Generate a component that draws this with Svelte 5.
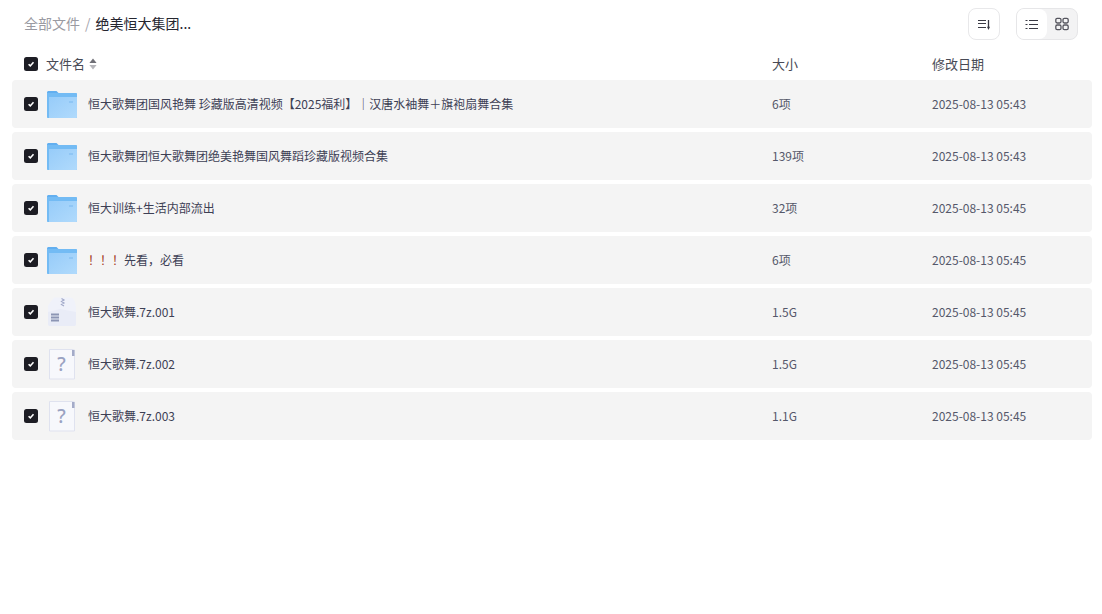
<script>
  const rows = [
    { kind: "folder", name: "恒大歌舞团国风艳舞 珍藏版高清视频【2025福利】｜汉唐水袖舞＋旗袍扇舞合集", size: "6项", date: "2025-08-13 05:43" },
    { kind: "folder", name: "恒大歌舞团恒大歌舞团绝美艳舞国风舞蹈珍藏版视频合集", size: "139项", date: "2025-08-13 05:43" },
    { kind: "folder", name: "恒大训练+生活内部流出", size: "32项", date: "2025-08-13 05:45" },
    { kind: "folder", mark: "！！！", name: "先看，必看", size: "6项", date: "2025-08-13 05:45" },
    { kind: "zip", name: "恒大歌舞.7z.001", size: "1.5G", date: "2025-08-13 05:45" },
    { kind: "unknown", name: "恒大歌舞.7z.002", size: "1.5G", date: "2025-08-13 05:45" },
    { kind: "unknown", name: "恒大歌舞.7z.003", size: "1.1G", date: "2025-08-13 05:45" }
  ];
</script>

{#snippet check()}
  <span class="check">
    <svg width="10" height="10" viewBox="0 0 10 10"><path d="M2.6 5.2 4.300 6.900 7.500 3.200" fill="none" stroke="#fff" stroke-width="1.600" /></svg>
  </span>
{/snippet}

<div class="page">
  <header class="top">
    <nav class="crumbs">
      <span class="root">全部文件</span>
      <span class="sep">/</span>
      <span class="current">绝美恒大集团...</span>
    </nav>
    <div class="tools">
      <button class="tool" aria-label="排序">
        <svg width="16" height="16" viewBox="0 0 16 16" fill="none" stroke="#3a3a44">
          <path d="M2 4.500H10M2 7.500H10M2 11.500H10" />
          <path d="M12.500 4V12" stroke-width="1.300" />
          <path d="M11 10.800 12.500 14 14 10.800Z" fill="#3a3a44" stroke="none" />
        </svg>
      </button>
      <div class="switch">
        <button class="mode on" aria-label="列表">
          <svg width="14" height="14" viewBox="0 0 14 14" fill="none" stroke="#3a3a44">
            <path d="M0.500 3.500H2.500M0.500 7.500H2.500M0.500 11.500H2.500M4 3.500H13M4 7.500H13M4 11.500H13" />
          </svg>
        </button>
        <button class="mode" aria-label="网格">
          <svg width="14" height="14" viewBox="0 0 14 14" fill="none" stroke="#55555e" stroke-width="1.300">
            <rect x="0.800" y="1.400" width="5.200" height="4.600" rx="1.400" />
            <rect x="8" y="1.400" width="5.200" height="4.600" rx="1.400" />
            <rect x="0.800" y="8" width="5.200" height="4.600" rx="1.400" />
            <rect x="8" y="8" width="5.200" height="4.600" rx="1.400" />
          </svg>
        </button>
      </div>
    </div>
  </header>

  <div class="head">
    {@render check()}
    <div class="col-name head-name">
      <span class="label">文件名</span>
      <svg width="8" height="12" viewBox="0 0 8 12"><path d="M4 0.500 7.600 5H0.400Z" fill="#6f6f76" /><path d="M4 11.500 0.400 7H7.600Z" fill="#b5b5ba" /></svg>
    </div>
    <div class="col-size label">大小</div>
    <div class="col-date label">修改日期</div>
  </div>

  <div class="list">
    {#each rows as row}
      <div class="row">
        {@render check()}
        <div class="icon">
          {#if row.kind === "folder"}
            <svg width="32" height="30" viewBox="0 0 32 30">
              <defs>
                <linearGradient id="front" x1="0" y1="0" x2="1" y2="1">
                  <stop offset="0" stop-color="#97ccf9" />
                  <stop offset="1" stop-color="#b0dafc" />
                </linearGradient>
              </defs>
              <path d="M1 3.500C1 2.600 1.700 2 2.500 2H10.500L13 4.500H1Z" fill="#62aff0" />
              <path d="M1 4H30C30.600 4 31 4.400 31 5V28C31 28.600 30.600 29 30 29H2C1.400 29 1 28.600 1 28Z" fill="#73bbf4" />
              <path d="M3 8H31V28C31 28.600 30.600 29 30 29H3Z" fill="url(#front)" />
              <rect x="23" y="12" width="4" height="2" fill="#8fc6f5" />
            </svg>
          {:else if row.kind === "zip"}
            <svg width="32" height="32" viewBox="0 0 32 32">
              <path d="M3 8 8 1.500H24C26 1.500 28 3 28.500 5L30 10V28C30 29.400 29 30 28 30H4C3 30 2 29.400 2 28V10Z" fill="#f0f2fa" />
              <path d="M2 16 14 13 30 16V28C30 29.400 29 30 28 30H4C3 30 2 29.400 2 28Z" fill="#e9ecf7" />
              <path d="M15.500 2.500 18 4 15.500 5.500 18 7 15.500 8.500 18 10" fill="none" stroke="#a3abca" stroke-width="1.200" />
              <path d="M5 18.500H13M5 21.500H13M5 24.500H13" stroke="#8c95b4" stroke-width="1.800" />
            </svg>
          {:else}
            <svg width="32" height="32" viewBox="0 0 32 32">
              <path d="M3.500 1.500H27V2H28.500V31H3.500Z" fill="#f7f8fc" stroke="#dfe2ef" />
              <rect x="26" y="2" width="2.500" height="6" fill="#a4abc8" />
              <text x="15.500" y="23" text-anchor="middle" class="qm">?</text>
            </svg>
          {/if}
        </div>
        <div class="col-name file-name">
          {#if row.mark}<span class="mark">{row.mark}</span>{/if}{row.name}
        </div>
        <div class="col-size cell">{row.size}</div>
        <div class="col-date cell">{row.date}</div>
      </div>
    {/each}
  </div>
</div>

<style>
  :global(body) {
    margin: 0;
    background: #fff;
    font-family: "Noto Sans CJK SC", "Noto Sans", sans-serif;
  }

  .page {
    width: 1102px;
    height: 614px;
    box-sizing: border-box;
    padding: 8px 10px 0 12px;
  }

  .top {
    display: flex;
    align-items: center;
    justify-content: space-between;
    height: 32px;
    padding: 0 14px 0 12px;
  }

  .crumbs {
    display: flex;
    align-items: center;
    padding-bottom: 2px;
    font-size: 14px;
    line-height: 20px;
  }

  .root {
    color: #9a9aa2;
  }

  .sep {
    margin: 0 5px;
    color: #a5a5ae;
  }

  .current {
    color: #25262f;
  }

  .tools {
    display: flex;
    gap: 16px;
  }

  button {
    padding: 0;
    display: flex;
    align-items: center;
    justify-content: center;
    background: none;
    border: 0;
  }

  .tool {
    width: 32px;
    height: 32px;
    box-sizing: border-box;
    background: #fff;
    border: 1px solid #e8e8ea;
    border-radius: 8px;
  }

  .switch {
    display: flex;
    width: 62px;
    height: 32px;
    box-sizing: border-box;
    overflow: hidden;
    background: #f3f3f4;
    border: 1px solid #e6e6e8;
    border-radius: 8px;
  }

  .mode {
    flex: 1;
  }

  .mode.on {
    background: #fff;
    border-radius: 0 8px 8px 0;
  }

  .head {
    display: flex;
    align-items: center;
    height: 32px;
    padding: 8px 12px 0;
  }

  .check {
    flex: none;
    width: 14px;
    height: 14px;
    display: flex;
    align-items: center;
    justify-content: center;
    background: #1d1d24;
    border-radius: 2.500px;
  }

  .col-name {
    flex: 1;
    min-width: 0;
  }

  .col-size {
    width: 160px;
    flex: none;
  }

  .col-date {
    width: 148px;
    flex: none;
  }

  .head-name {
    display: flex;
    align-items: center;
    gap: 4px;
    margin-left: 8px;
  }

  .label {
    padding-bottom: 2px;
    color: #484a55;
    font-size: 13px;
  }

  .list {
    display: flex;
    flex-direction: column;
    gap: 4px;
  }

  .row {
    display: flex;
    align-items: center;
    height: 48px;
    padding: 0 12px;
    background: #f4f4f4;
    border-radius: 4px;
  }

  .icon {
    flex: none;
    width: 32px;
    height: 32px;
    margin: 0 10px 0 8px;
    display: flex;
    align-items: center;
    justify-content: center;
  }

  .file-name {
    padding-bottom: 2px;
    color: #3d4054;
    font-size: 12px;
  }

  .mark {
    color: #a33a26;
  }

  .cell {
    padding-bottom: 2px;
    color: #55586a;
    font-size: 12px;
  }

  .qm {
    fill: #9aa2c2;
    font-size: 19px;
    font-family: "Noto Sans", sans-serif;
    font-weight: 500;
  }
</style>
